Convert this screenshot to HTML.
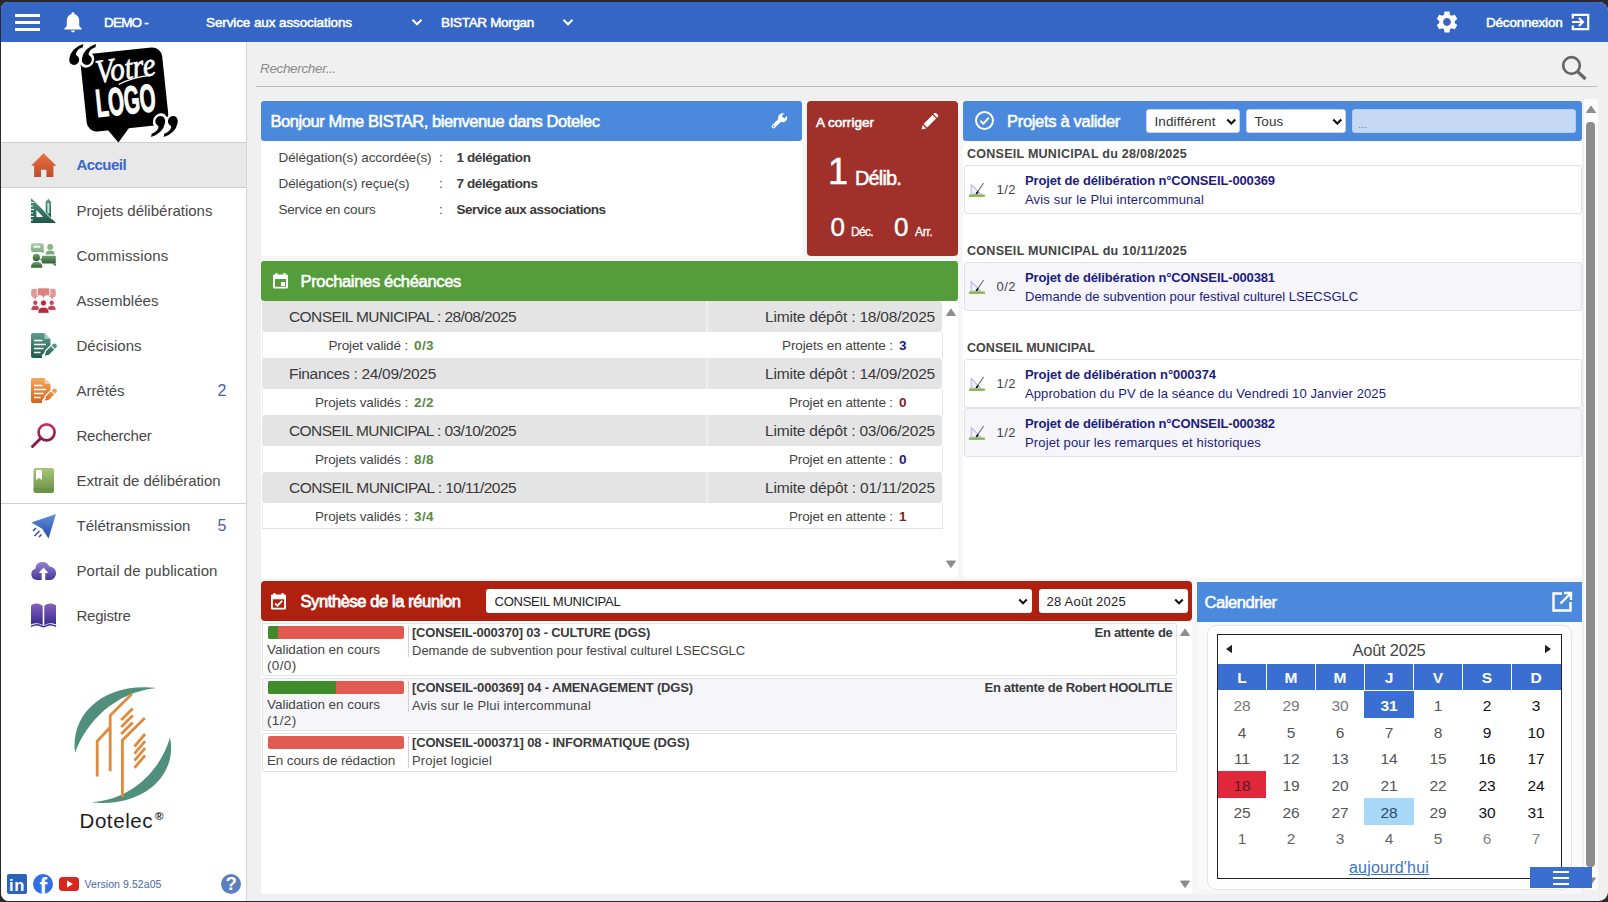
<!DOCTYPE html>
<html lang="fr">
<head>
<meta charset="utf-8">
<title>Dotelec</title>
<style>
*{box-sizing:border-box;margin:0;padding:0}
html,body{width:1608px;height:902px;overflow:hidden;background:#2a2a2e;font-family:"Liberation Sans",sans-serif;color:#333}
#app{position:absolute;left:1px;top:2px;width:1607px;height:898.6px;background:#f0f0f0;border-radius:7px 9px 9px 8px;overflow:hidden}
#pg{position:absolute;left:-1px;top:-2px;width:1608px;height:902px}
.a{position:absolute}
.t{position:absolute;white-space:pre;line-height:1;color:#333}
</style>
</head>
<body>
<div id="app"><div id="pg">
<div class="a" style="left:0px;top:0px;width:1608px;height:42px;background:#3566c5;"></div>
<div class="a" style="left:15px;top:14px;width:25px;height:3px;background:#fff;"></div>
<div class="a" style="left:15px;top:21px;width:25px;height:3px;background:#fff;"></div>
<div class="a" style="left:15px;top:28px;width:25px;height:3px;background:#fff;"></div>
<svg class="a" style="left:63px;top:11px;" width="20" height="22" viewBox="0 0 20 22"><path d="M10 1.200c-.9 0-1.600.7-1.600 1.500v.5C5.600 3.900 3.800 6.300 3.800 9.200v4.500c0 1.100-.5 2.100-1.300 2.800L1.300 17.600v1h17.400v-1l-1.200-1.100c-.8-.7-1.300-1.700-1.300-2.800V9.200c0-2.900-1.800-5.300-4.600-6V2.700c0-.8-.7-1.500-1.600-1.500zM8 19.400c0 1.100.9 1.900 2 1.900s2-.8 2-1.900z" fill="#fff"/></svg>
<span class="t" style="left:104.00px;top:15.87px;font-size:13.5px;color:#fff;letter-spacing:-0.792px;-webkit-text-stroke:0.5px currentColor;">DEMO -</span>
<span class="t" style="left:206.00px;top:15.87px;font-size:13.5px;color:#fff;letter-spacing:-0.107px;-webkit-text-stroke:0.5px currentColor;">Service aux associations</span>
<svg class="a" style="left:411px;top:18px;" width="12" height="9" viewBox="0 0 12 9"><path d="M1.500 1.800L6 6.300L10.500 1.800" fill="none" stroke="#fff" stroke-width="2.200"/></svg>
<span class="t" style="left:441.00px;top:15.87px;font-size:13.5px;color:#fff;letter-spacing:-0.331px;-webkit-text-stroke:0.5px currentColor;">BISTAR Morgan</span>
<svg class="a" style="left:562px;top:18px;" width="12" height="9" viewBox="0 0 12 9"><path d="M1.500 1.800L6 6.300L10.500 1.800" fill="none" stroke="#fff" stroke-width="2.200"/></svg>
<svg class="a" style="left:1434.2px;top:9px;" width="26" height="26" viewBox="0 0 24 24"><path fill="#fff" d="M19.140 12.940c.040-.3.060-.61.060-.94 0-.32-.020-.64-.070-.94l2.030-1.580c.180-.14.230-.41.120-.61l-1.920-3.320c-.12-.22-.37-.29-.59-.22l-2.390.96c-.5-.38-1.030-.7-1.620-.94l-.36-2.540c-.040-.24-.24-.41-.48-.41h-3.840c-.24 0-.43.170-.47.410l-.36 2.540c-.59.240-1.130.57-1.620.94l-2.390-.96c-.22-.08-.47 0-.59.220L2.740 8.870c-.12.210-.08.470.12.610l2.030 1.580c-.05.300-.09.630-.09.940s.020.640.070.940l-2.030 1.580c-.18.140-.23.410-.12.610l1.920 3.320c.12.220.37.290.59.220l2.390-.96c.5.380 1.030.7 1.620.94l.36 2.540c.05.240.24.410.48.410h3.840c.24 0 .44-.17.470-.41l.36-2.540c.59-.24 1.130-.56 1.620-.94l2.390.96c.22.080.47 0 .59-.22l1.920-3.320c.12-.22.070-.47-.12-.61l-2.010-1.580zM12 15.600c-1.980 0-3.600-1.620-3.600-3.600s1.620-3.600 3.600-3.600 3.600 1.620 3.600 3.600-1.620 3.600-3.600 3.600z"/></svg>
<span class="t" style="left:1486.00px;top:15.87px;font-size:13.5px;color:#fff;letter-spacing:-0.210px;-webkit-text-stroke:0.5px currentColor;">Déconnexion</span>
<svg class="a" style="left:1571px;top:13px;" width="19" height="18" viewBox="0 0 19 18"><path d="M1.800 5.500V1.800H17.200V16.200H1.800V12.500" fill="none" stroke="#fff" stroke-width="2.200"/><path d="M1 9H11.500M8 5L12 9L8 13" fill="none" stroke="#fff" stroke-width="2.200"/></svg>
<div class="a" style="left:0px;top:42px;width:246px;height:860px;background:#fff;"></div>
<div class="a" style="left:246px;top:42px;width:1px;height:860px;background:#d4d4d4;"></div>
<div class="a" style="left:1px;top:142px;width:245px;height:46px;background:#e8e8e8;border-top:1px solid #cfcfcf;border-bottom:1px solid #cfcfcf;"></div>
<div class="a" style="left:1px;top:502.5px;width:245px;height:1px;background:#cfcfcf;"></div>
<span class="t" style="left:76.50px;top:157.30px;font-size:15px;color:#3a66c4;font-weight:bold;letter-spacing:-0.551px;">Accueil</span>
<span class="t" style="left:76.50px;top:203.30px;font-size:15px;color:#484848;">Projets délibérations</span>
<span class="t" style="left:76.50px;top:248.30px;font-size:15px;color:#484848;letter-spacing:0.180px;">Commissions</span>
<span class="t" style="left:76.50px;top:293.30px;font-size:15px;color:#484848;letter-spacing:0.030px;">Assemblées</span>
<span class="t" style="left:76.50px;top:338.30px;font-size:15px;color:#484848;">Décisions</span>
<span class="t" style="left:76.50px;top:383.30px;font-size:15px;color:#484848;letter-spacing:-0.051px;">Arrêtés</span>
<span class="t" style="left:76.50px;top:428.30px;font-size:15px;color:#484848;letter-spacing:-0.255px;">Rechercher</span>
<span class="t" style="left:76.50px;top:473.30px;font-size:15px;color:#484848;letter-spacing:-0.048px;">Extrait de délibération</span>
<span class="t" style="left:76.50px;top:518.30px;font-size:15px;color:#484848;letter-spacing:0.039px;">Télétransmission</span>
<span class="t" style="left:76.50px;top:563.30px;font-size:15px;color:#484848;letter-spacing:0.079px;">Portail de publication</span>
<span class="t" style="left:76.50px;top:608.30px;font-size:15px;color:#484848;letter-spacing:-0.232px;">Registre</span>
<span class="t" style="left:217.50px;top:383.46px;font-size:16px;color:#4560b0;">2</span>
<span class="t" style="left:217.50px;top:518.46px;font-size:16px;color:#4560b0;">5</span>
<svg width="0" height="0" style="position:absolute"><defs><linearGradient id="gH" x1="0" y1="0" x2="0" y2="1"><stop offset="0" stop-color="#ea7340"/><stop offset="1" stop-color="#bf4a2a"/></linearGradient><linearGradient id="gR" x1="0" y1="0" x2="0" y2="1"><stop offset="0" stop-color="#5a9886"/><stop offset="1" stop-color="#1d5747"/></linearGradient><linearGradient id="gC1" x1="0" y1="0" x2="0" y2="1"><stop offset="0" stop-color="#a9cca6"/><stop offset="1" stop-color="#7fae80"/></linearGradient><linearGradient id="gC2" x1="0" y1="0" x2="0" y2="1"><stop offset="0" stop-color="#6fa070"/><stop offset="1" stop-color="#2f6035"/></linearGradient><linearGradient id="gA" x1="0" y1="0" x2="0" y2="1"><stop offset="0" stop-color="#e39a98"/><stop offset="1" stop-color="#ad2436"/></linearGradient><linearGradient id="gD" x1="0" y1="0" x2="0" y2="1"><stop offset="0" stop-color="#5f9c8c"/><stop offset="1" stop-color="#1f5a4a"/></linearGradient><linearGradient id="gO" x1="0" y1="0" x2="0" y2="1"><stop offset="0" stop-color="#f3a85a"/><stop offset="1" stop-color="#d4631c"/></linearGradient><linearGradient id="gS" x1="0" y1="0" x2="0" y2="1"><stop offset="0" stop-color="#c92f62"/><stop offset="1" stop-color="#861a46"/></linearGradient><linearGradient id="gB" x1="0" y1="0" x2="0" y2="1"><stop offset="0" stop-color="#a6c678"/><stop offset="1" stop-color="#688e46"/></linearGradient><linearGradient id="gP" x1="0" y1="0" x2="0" y2="1"><stop offset="0" stop-color="#5f92e0"/><stop offset="1" stop-color="#2846a4"/></linearGradient><linearGradient id="gU" x1="0" y1="0" x2="0" y2="1"><stop offset="0" stop-color="#9484d6"/><stop offset="1" stop-color="#46369a"/></linearGradient><linearGradient id="gK" x1="0" y1="0" x2="0" y2="1"><stop offset="0" stop-color="#8462c0"/><stop offset="1" stop-color="#36288a"/></linearGradient></defs></svg><svg class="a" style="left:31px;top:152.8px;overflow:visible" width="25" height="25" viewBox="0 0 25 25"><path fill="url(#gH)" d="M12.600 0.300L25.400 12.800H22.400V24H15.400V16.800H10V24H3.100V12.800H0.100Z"/></svg><svg class="a" style="left:31px;top:198.0px;overflow:visible" width="25" height="25" viewBox="0 0 25 25"><path fill="url(#gR)" fill-rule="evenodd" d="M0 0L25 25H0ZM5.400 12L12.200 19H5.400Z"/><path d="M0 4.500H3M0 8H2M0 11.500H3M0 15H2M0 18.500H3M0 22H2" stroke="#fff" stroke-width="1.100"/><path fill="url(#gR)" stroke="#fff" stroke-width="0.900" d="M14.200 4L17.350 0.200L20.500 4V20.800L14.200 14.500Z"/><path d="M17.350 5V15.500" stroke="#bfe3d6" stroke-width="2.100"/></svg><svg class="a" style="left:31px;top:243.1px;overflow:visible" width="25" height="25" viewBox="0 0 25 25"><rect x="0" y="0.300" width="12.700" height="8.700" rx="2" fill="url(#gC1)"/><path d="M9.500 8.800L13.600 10.300L12.200 7Z" fill="#86b286"/><rect x="2.500" y="2.800" width="6.700" height="1.800" fill="#fff"/><circle cx="19.200" cy="4.100" r="3" fill="#8ab488"/><path d="M14.800 11.500C14.800 8.500 16.500 7.600 19.200 7.600S23.600 8.500 23.600 11.500Z" fill="#7aaa7a"/><circle cx="5.400" cy="14.500" r="3.700" fill="url(#gC2)"/><path d="M0 24.800C0 20.300 2 19 5.700 19S11.400 20.300 11.400 24.800Z" fill="url(#gC2)"/><rect x="11" y="12.700" width="13.800" height="7.900" rx="0.800" fill="url(#gC2)"/><path d="M21.300 20.500L24.800 23.300V20.500ZM11 15L9.300 16.600L11 18.200Z" fill="#39703f"/></svg><svg class="a" style="left:31px;top:288.0px;overflow:visible" width="25" height="25" viewBox="0 0 25 25"><rect x="0.200" y="0.800" width="7" height="8.400" rx="2.200" fill="#e09896"/><rect x="17.800" y="0.800" width="7" height="8.400" rx="2.200" fill="#e09896"/><path d="M2.500 9L4 11.500L5.500 9ZM19.500 9L21 11.500L22.500 9Z" fill="#d88"/><path d="M7.700 -0.200H17.300A1.500 1.500 0 0 1 18.800 1.300V6.400A1.500 1.500 0 0 1 17.300 7.900H14.300L12.500 10.500L10.700 7.900H7.700A1.500 1.500 0 0 1 6.200 6.400V1.300A1.500 1.500 0 0 1 7.700 -0.200Z" fill="#dc8282" stroke="#fff" stroke-width="1"/><circle cx="4.3" cy="14.7" r="2.18" fill="#c4475a"/><path d="M0.31 22.11C0.31 18.50 1.92 17.74 4.3 17.74S8.29 18.50 8.29 22.11Z" fill="#c4475a"/><circle cx="20.7" cy="14.7" r="2.18" fill="#c4475a"/><path d="M16.71 22.11C16.71 18.50 18.32 17.74 20.7 17.74S24.69 18.50 24.69 22.11Z" fill="#c4475a"/><g stroke="#fff" stroke-width="0.800"><circle cx="12.5" cy="15" r="3.04" fill="#b32b3c"/><path d="M6.96 25.30C6.96 20.28 9.20 19.22 12.5 19.22S18.04 20.28 18.04 25.30Z" fill="#b32b3c"/></g></svg><svg class="a" style="left:31px;top:333.0px;overflow:visible" width="25" height="25" viewBox="0 0 25 25"><path fill="url(#gD)" d="M2 0H13.500L19.500 6V13.500L11 22V25H2A2 2 0 0 1 0 23V2A2 2 0 0 1 2 0Z"/><path d="M13.500 0V6H19.500Z" fill="#fff" opacity=".5"/><path d="M3 7.500H11.500M3 11.500H15M3 15.500H12.500M3 19.500H9.500" stroke="#fff" stroke-width="1.500"/><g transform="translate(19.300 17.200) rotate(45)"><path fill="url(#gD)" stroke="#fff" stroke-width="1.300" d="M-3 -6A3 3 0 0 1 3 -6V3.800L0 9L-3 3.800Z"/><path d="M-3 -3.800H3" stroke="#fff" stroke-width="1"/></g></svg><svg class="a" style="left:31px;top:378.0px;overflow:visible" width="25" height="25" viewBox="0 0 25 25"><path fill="url(#gO)" d="M2 0H13.500L19.500 6V13.500L11 22V25H2A2 2 0 0 1 0 23V2A2 2 0 0 1 2 0Z"/><path d="M13.500 0V6H19.500Z" fill="#fff" opacity=".5"/><path d="M3 7.500H11.500M3 11.500H15M3 15.500H12.500M3 19.500H9.500" stroke="#fff" stroke-width="1.500"/><g transform="translate(19.300 17.200) rotate(45)"><path fill="url(#gO)" stroke="#fff" stroke-width="1.300" d="M-3 -6A3 3 0 0 1 3 -6V3.800L0 9L-3 3.800Z"/><path d="M-3 -3.800H3" stroke="#fff" stroke-width="1"/></g></svg><svg class="a" style="left:31px;top:422.7px;overflow:visible" width="25" height="25" viewBox="0 0 25 25"><circle cx="15.600" cy="9.300" r="8" fill="none" stroke="url(#gS)" stroke-width="2.700"/><path d="M9.800 15.200L1.500 23.500" stroke="#8e1c4a" stroke-width="3" stroke-linecap="round"/></svg><svg class="a" style="left:31px;top:468.0px;overflow:visible" width="25" height="25" viewBox="0 0 25 25"><rect x="2.500" y="0" width="20.500" height="25" rx="2.200" fill="url(#gB)"/><path d="M5 2H11V12L8 10L5 12Z" fill="#fff"/><rect x="2.500" y="20.500" width="20.500" height="1" fill="#5e8440" opacity=".5"/></svg><svg class="a" style="left:31px;top:513.8px;overflow:visible" width="25" height="25" viewBox="0 0 25 25"><path fill="url(#gP)" d="M25 0L0.300 8.500L11.200 14.800L17.500 24.600Z"/><path d="M2 17L5 14M3.500 22L8.500 17M8 23L10.500 20.500" stroke="#3a4fa8" stroke-width="1.600"/></svg><svg class="a" style="left:31px;top:558.0px;overflow:visible" width="25" height="25" viewBox="0 0 25 25"><path fill="url(#gU)" d="M6 22A5.800 5.800 0 0 1 4.300 10.700A7.300 7.300 0 0 1 18.300 8.500A6.800 6.800 0 0 1 19.500 22Z"/><path d="M12.500 9.500L17.300 15H14.300V22H10.700V15H7.700Z" fill="#fff"/></svg><svg class="a" style="left:31px;top:602.3px;overflow:visible" width="25" height="25" viewBox="0 0 25 25"><path fill="url(#gK)" d="M0 3.500C4 0.500 9 1 11.700 4V23.500C9 21 4 20.500 0 22.500Z"/><path fill="url(#gK)" d="M25 3.500C21 0.500 16 1 13.300 4V23.500C16 21 21 20.500 25 22.500Z"/><path d="M0 24.300C4 22.500 8.500 22.500 11 24.500H14C16.500 22.500 21 22.500 25 24.300" fill="none" stroke="#3a2a8a" stroke-width="1.400"/></svg>
<svg class="a" style="left:60px;top:42px" width="130" height="103" viewBox="60 42 130 103"><g transform="rotate(-6 124.5 90)"><rect x="83.500" y="50.500" width="82" height="78" rx="10" fill="#000"/><path d="M103 127L113 141.500L126 127Z" fill="#000"/></g><text x="0" y="0" transform="translate(61 89.500) skewX(-10) scale(0.9 1.08)" style="font-family:'Liberation Serif',serif;font-weight:bold;font-size:64px;fill:#000;stroke:#fff;stroke-width:5px;paint-order:stroke">“</text><text x="0" y="0" transform="translate(144.500 161.500) skewX(-10) scale(0.9 1.08)" style="font-family:'Liberation Serif',serif;font-weight:bold;font-size:64px;fill:#000;stroke:#fff;stroke-width:5px;paint-order:stroke">”</text><g transform="rotate(-8 125 72)"><text x="96" y="79" textLength="60" lengthAdjust="spacingAndGlyphs" style="font-family:'Liberation Serif',serif;font-style:italic;font-size:33px;fill:#fff;stroke:#fff;stroke-width:0.700px">Votre</text><path d="M117 83.500C128 79.500 140 78.500 152 79" stroke="#fff" stroke-width="1.400" fill="none"/></g><g transform="rotate(-6 126 104)"><text x="96" y="114" textLength="60" lengthAdjust="spacingAndGlyphs" style="font-family:'Liberation Sans',sans-serif;font-weight:bold;font-size:39px;fill:#fff;stroke:#fff;stroke-width:1.200px">LOGO</text></g></svg>
<svg class="a" style="left:60px;top:680px" width="130" height="160" viewBox="60 680 130 160"><path fill="#4f8f7b" d="M75.100 752.700C70 714 104 682 156.600 688C115 692 86 722 75.100 752.700Z"/><path fill="#4f8f7b" d="M170 737.600C178 776 142 808 91 802.300C130 800 160 772 170 737.600Z"/><path d="M97.200 776.600V741.200L110.500 727" fill="none" stroke="#e08a3c" stroke-width="2.800"/><path d="M110.200 771.300V715.500L131.800 694" fill="none" stroke="#e08a3c" stroke-width="2.800"/><path d="M122.400 797V740.300L144.800 718.100" fill="none" stroke="#e08a3c" stroke-width="2.800"/><path d="M121.200 720.0L132.700 708.4" stroke="#e08a3c" stroke-width="2.800"/><path d="M121.200 727.0L132.700 715.4" stroke="#e08a3c" stroke-width="2.800"/><path d="M121.200 734.0L132.700 722.4" stroke="#e08a3c" stroke-width="2.800"/><path d="M134.500 746.5L145.100 734.0" stroke="#e08a3c" stroke-width="2.800"/><path d="M134.500 753.6L145.100 741.1" stroke="#e08a3c" stroke-width="2.800"/><path d="M134.500 760.7L145.100 748.2" stroke="#e08a3c" stroke-width="2.800"/><path d="M134.500 767.8L145.100 755.3" stroke="#e08a3c" stroke-width="2.800"/><text x="79.500" y="828" textLength="73" lengthAdjust="spacing" style="font-family:'Liberation Sans',sans-serif;font-size:20.500px;fill:#1c1c1c">Dotelec</text><text x="155" y="819.500" style="font-family:'Liberation Sans',sans-serif;font-size:11.500px;font-weight:bold;fill:#1c1c1c">®</text></svg>
<div class="a" style="left:7px;top:874px;width:20px;height:20px;background:#2a63b8;border-radius:2px"></div><span class="t" style="left:9.00px;top:877.33px;font-size:16.5px;color:#fff;font-weight:bold;letter-spacing:0.664px;">in</span><div class="a" style="left:33px;top:874px;width:20.200px;height:20.200px;background:#2f6fe8;border-radius:50%;overflow:hidden"><span style="position:absolute;left:6.500px;top:1.500px;font-size:23px;line-height:1;font-weight:bold;color:#fff">f</span></div><div class="a" style="left:59px;top:877px;width:20px;height:14px;background:#d8281e;border-radius:3.500px"></div><svg class="a" style="left:66px;top:880px" width="8" height="8" viewBox="0 0 8 8"><path d="M1 0.500L7 4L1 7.500Z" fill="#fff"/></svg><span class="t" style="left:84.50px;top:878.91px;font-size:10.5px;color:#4a66a8;letter-spacing:0.073px;">Version 9.52a05</span><div class="a" style="left:221px;top:874px;width:20.200px;height:20.200px;background:#5b80c0;border-radius:50%"></div><span class="t" style="left:225.54px;top:875.04px;font-size:18.5px;color:#fff;font-weight:bold;">?</span>
<span class="t" style="left:260.00px;top:61.87px;font-size:13.5px;color:#8a8a8a;font-style:italic;letter-spacing:-0.350px;">Rechercher...</span>
<div class="a" style="left:256px;top:86px;width:1341px;height:1px;background:#bdbdbd;"></div>
<svg class="a" style="left:1559px;top:53px;" width="30" height="30" viewBox="0 0 30 30"><circle cx="12.500" cy="12.500" r="8.300" fill="none" stroke="#666" stroke-width="2.700"/><path d="M18.500 18.500L26.500 26" stroke="#666" stroke-width="3.200" fill="none"/></svg>
<div class="a" style="left:261px;top:101px;width:1321px;height:793px;background:#f6f6f6;"></div>
<div class="a" style="left:261px;top:101px;width:541px;height:155px;background:#fff;border-radius:3px;"></div>
<div class="a" style="left:261px;top:101px;width:541px;height:40px;background:#4a89dc;border-radius:3px;"></div>
<span class="t" style="left:270.50px;top:113.03px;font-size:16.5px;color:#fff;letter-spacing:-0.436px;-webkit-text-stroke:0.55px currentColor;">Bonjour Mme BISTAR, bienvenue dans Dotelec</span>
<svg class="a" style="left:770.5px;top:113px;" width="17" height="16" viewBox="0 0 17 16"><path d="M2.600 13.400L9.200 6.800" stroke="#fff" stroke-width="3.800" stroke-linecap="round"/><circle cx="11.700" cy="4.700" r="4.500" fill="#fff"/><rect x="11.400" y="-0.500" width="3.600" height="5.200" transform="rotate(45 13.200 2.100) translate(0.700 -0.300)" fill="#4a89dc"/><circle cx="2.700" cy="13.300" r="0.850" fill="#4a89dc"/></svg>
<span class="t" style="left:278.50px;top:151.07px;font-size:13.5px;color:#444;letter-spacing:-0.093px;">Délégation(s) accordée(s)</span>
<span class="t" style="left:439.00px;top:151.07px;font-size:13.5px;color:#444;">:</span>
<span class="t" style="left:456.50px;top:151.07px;font-size:13.5px;color:#3a3a3a;font-weight:bold;letter-spacing:-0.397px;">1 délégation</span>
<span class="t" style="left:278.50px;top:177.07px;font-size:13.5px;color:#444;letter-spacing:-0.116px;">Délégation(s) reçue(s)</span>
<span class="t" style="left:439.00px;top:177.07px;font-size:13.5px;color:#444;">:</span>
<span class="t" style="left:456.50px;top:177.07px;font-size:13.5px;color:#3a3a3a;font-weight:bold;letter-spacing:-0.406px;">7 délégations</span>
<span class="t" style="left:278.50px;top:203.07px;font-size:13.5px;color:#444;letter-spacing:-0.222px;">Service en cours</span>
<span class="t" style="left:439.00px;top:203.07px;font-size:13.5px;color:#444;">:</span>
<span class="t" style="left:456.50px;top:203.07px;font-size:13.5px;color:#3a3a3a;font-weight:bold;letter-spacing:-0.483px;">Service aux associations</span>
<div class="a" style="left:807px;top:101px;width:151px;height:155px;background:#9f302a;border-radius:4px;"></div>
<span class="t" style="left:816.00px;top:116.07px;font-size:13.5px;color:#fff;letter-spacing:0.022px;-webkit-text-stroke:0.55px currentColor;">A corriger</span>
<svg class="a" style="left:921px;top:112.5px;" width="18" height="17" viewBox="0 0 18 17"><path fill="#fff" d="M0.500 16.600L1.700 11.900L5.200 15.400ZM2.600 10.900L11.500 2L15.100 5.600L6.200 14.500ZM12.400 1.100L13.200 0.300A1.500 1.500 0 0 1 15.300 0.300L16.800 1.800A1.500 1.500 0 0 1 16.800 3.900L16 4.700Z"/></svg>
<span class="t" style="left:828.00px;top:154.03px;font-size:36px;color:#fff;-webkit-text-stroke:0.5px currentColor;">1</span>
<span class="t" style="left:855.00px;top:167.57px;font-size:20px;color:#fff;letter-spacing:-0.857px;-webkit-text-stroke:0.5px currentColor;">Délib.</span>
<span class="t" style="left:830.50px;top:213.99px;font-size:26px;color:#fff;-webkit-text-stroke:0.4px currentColor;">0</span>
<span class="t" style="left:851.00px;top:225.84px;font-size:12px;color:#fff;letter-spacing:-0.672px;-webkit-text-stroke:0.3px currentColor;">Déc.</span>
<span class="t" style="left:894.00px;top:213.99px;font-size:26px;color:#fff;-webkit-text-stroke:0.4px currentColor;">0</span>
<span class="t" style="left:915.00px;top:225.84px;font-size:12px;color:#fff;letter-spacing:-0.293px;-webkit-text-stroke:0.3px currentColor;">Arr.</span>
<div class="a" style="left:963px;top:101px;width:619px;height:477px;background:#fff;border-radius:3px;"></div>
<div class="a" style="left:963px;top:101px;width:619px;height:40px;background:#4a89dc;border-radius:3px;"></div>
<svg class="a" style="left:974px;top:110px;" width="21" height="21" viewBox="0 0 21 21"><circle cx="10.500" cy="10.500" r="8.500" fill="none" stroke="#fff" stroke-width="2"/><path d="M6.300 10.800L9.300 13.700L14.800 7.800" fill="none" stroke="#fff" stroke-width="2"/></svg>
<span class="t" style="left:1007.00px;top:113.03px;font-size:16.5px;color:#fff;letter-spacing:-0.312px;-webkit-text-stroke:0.55px currentColor;">Projets à valider</span>
<div class="a" style="left:1146px;top:109px;width:94px;height:24px;background:#fff;border-radius:3px;border:1px solid #c9d6ea;"></div>
<span class="t" style="left:1154.50px;top:114.57px;font-size:13.5px;letter-spacing:0.109px;">Indifférent</span>
<svg class="a" style="left:1226px;top:117.5px;" width="10.6" height="7.4" viewBox="0 0 10 7"><path d="M1.200 1.500L5 5.300L8.800 1.500" fill="none" stroke="#111" stroke-width="2"/></svg>
<div class="a" style="left:1246px;top:109px;width:100px;height:24px;background:#fff;border-radius:3px;border:1px solid #c9d6ea;"></div>
<span class="t" style="left:1254.50px;top:114.57px;font-size:13.5px;letter-spacing:0.117px;">Tous</span>
<svg class="a" style="left:1332px;top:117.5px;" width="10.6" height="7.4" viewBox="0 0 10 7"><path d="M1.200 1.500L5 5.300L8.800 1.500" fill="none" stroke="#111" stroke-width="2"/></svg>
<div class="a" style="left:1352px;top:109px;width:224px;height:24px;background:#c5d9f5;border-radius:3px;border:1px solid #b5cdf0;"></div>
<span class="t" style="left:1358.00px;top:118.69px;font-size:11px;color:#6f86b0;">...</span>
<span class="t" style="left:967.00px;top:148.22px;font-size:12.5px;color:#444;font-weight:bold;letter-spacing:0.262px;">CONSEIL MUNICIPAL du 28/08/2025</span>
<div class="a" style="left:964px;top:165px;width:618px;height:49px;background:#fff;border:1px solid #e2e2e6;border-radius:3px;"></div><svg class="a" style="left:968px;top:180.7px;" width="18" height="18" viewBox="0 0 18 18"><path d="M3.200 3.500V13.200H12.800Z" fill="#eeeefb" stroke="#b9b9e2" stroke-width="1.100"/><path d="M15.600 2L8.500 12.600" stroke="#707070" stroke-width="1.100"/><path d="M10 10.400L8.300 12.900" stroke="#111" stroke-width="1.700"/><rect x="0.900" y="13.500" width="16" height="2.400" fill="#8ab94a"/></svg><span class="t" style="left:996.50px;top:182.80px;font-size:13px;color:#444;letter-spacing:0.474px;">1/2</span><span class="t" style="left:1025.00px;top:174.00px;font-size:13px;color:#1c1c80;font-weight:bold;letter-spacing:-0.133px;">Projet de délibération n°CONSEIL-000369</span><span class="t" style="left:1025.00px;top:193.00px;font-size:13px;color:#1c1c80;letter-spacing:0.170px;">Avis sur le Plui intercommunal</span>
<span class="t" style="left:967.00px;top:245.22px;font-size:12.5px;color:#444;font-weight:bold;letter-spacing:0.284px;">CONSEIL MUNICIPAL du 10/11/2025</span>
<div class="a" style="left:964px;top:262px;width:618px;height:49px;background:#f5f5fa;border:1px solid #e2e2e6;border-radius:3px;"></div><svg class="a" style="left:968px;top:277.7px;" width="18" height="18" viewBox="0 0 18 18"><path d="M3.200 3.500V13.200H12.800Z" fill="#eeeefb" stroke="#b9b9e2" stroke-width="1.100"/><path d="M15.600 2L8.500 12.600" stroke="#707070" stroke-width="1.100"/><path d="M10 10.400L8.300 12.900" stroke="#111" stroke-width="1.700"/><rect x="0.900" y="13.500" width="16" height="2.400" fill="#8ab94a"/></svg><span class="t" style="left:996.50px;top:279.80px;font-size:13px;color:#444;letter-spacing:0.474px;">0/2</span><span class="t" style="left:1025.00px;top:271.00px;font-size:13px;color:#1c1c80;font-weight:bold;letter-spacing:-0.133px;">Projet de délibération n°CONSEIL-000381</span><span class="t" style="left:1025.00px;top:290.00px;font-size:13px;color:#1c1c80;">Demande de subvention pour festival culturel LSECSGLC</span>
<span class="t" style="left:967.00px;top:342.22px;font-size:12.5px;color:#444;font-weight:bold;letter-spacing:0.040px;">CONSEIL MUNICIPAL</span>
<div class="a" style="left:964px;top:359px;width:618px;height:49px;background:#fff;border:1px solid #e2e2e6;border-radius:3px;"></div><svg class="a" style="left:968px;top:374.7px;" width="18" height="18" viewBox="0 0 18 18"><path d="M3.200 3.500V13.200H12.800Z" fill="#eeeefb" stroke="#b9b9e2" stroke-width="1.100"/><path d="M15.600 2L8.500 12.600" stroke="#707070" stroke-width="1.100"/><path d="M10 10.400L8.300 12.900" stroke="#111" stroke-width="1.700"/><rect x="0.900" y="13.500" width="16" height="2.400" fill="#8ab94a"/></svg><span class="t" style="left:996.50px;top:376.80px;font-size:13px;color:#444;letter-spacing:0.474px;">1/2</span><span class="t" style="left:1025.00px;top:368.00px;font-size:13px;color:#1c1c80;font-weight:bold;letter-spacing:-0.066px;">Projet de délibération n°000374</span><span class="t" style="left:1025.00px;top:387.00px;font-size:13px;color:#1c1c80;letter-spacing:0.093px;">Approbation du PV de la séance du Vendredi 10 Janvier 2025</span>
<div class="a" style="left:964px;top:408px;width:618px;height:49px;background:#f5f5fa;border:1px solid #e2e2e6;border-radius:3px;"></div><svg class="a" style="left:968px;top:423.7px;" width="18" height="18" viewBox="0 0 18 18"><path d="M3.200 3.500V13.200H12.800Z" fill="#eeeefb" stroke="#b9b9e2" stroke-width="1.100"/><path d="M15.600 2L8.500 12.600" stroke="#707070" stroke-width="1.100"/><path d="M10 10.400L8.300 12.900" stroke="#111" stroke-width="1.700"/><rect x="0.900" y="13.500" width="16" height="2.400" fill="#8ab94a"/></svg><span class="t" style="left:996.50px;top:425.80px;font-size:13px;color:#444;letter-spacing:0.474px;">1/2</span><span class="t" style="left:1025.00px;top:417.00px;font-size:13px;color:#1c1c80;font-weight:bold;letter-spacing:-0.133px;">Projet de délibération n°CONSEIL-000382</span><span class="t" style="left:1025.00px;top:436.00px;font-size:13px;color:#1c1c80;letter-spacing:0.137px;">Projet pour les remarques et historiques</span>
<div class="a" style="left:261px;top:261px;width:697px;height:317px;background:#fff;border-radius:3px;"></div>
<div class="a" style="left:261px;top:261px;width:697px;height:40px;background:#559d3b;border-radius:3px;"></div>
<svg class="a" style="left:272px;top:271.5px;" width="17" height="17" viewBox="0 0 17 17"><path fill="#fff" fill-rule="evenodd" d="M2.200 2.500H3.500V1H5.500V2.500H11.500V1H13.500V2.500H14.800A1.200 1.200 0 0 1 16 3.700V15.300A1.200 1.200 0 0 1 14.800 16.500H2.200A1.200 1.200 0 0 1 1 15.300V3.700A1.200 1.200 0 0 1 2.200 2.500ZM2.900 7V14.700H14.100V7ZM9 10H13V14H9Z"/></svg>
<span class="t" style="left:300.50px;top:273.03px;font-size:16.5px;color:#fff;letter-spacing:-0.323px;-webkit-text-stroke:0.55px currentColor;">Prochaines échéances</span>
<div class="a" style="left:262px;top:301px;width:680px;height:31px;background:#e4e4e4;border-radius:3px;"></div>
<div class="a" style="left:706px;top:301px;width:2px;height:31px;background:#eeeeee;"></div>
<div class="a" style="left:262px;top:332px;width:681px;height:26px;background:#fff;border-right:1px solid #e4e4e4;border-left:1px solid #ececec;"></div>
<span class="t" style="left:289.00px;top:308.88px;font-size:15.5px;color:#3a3a3a;letter-spacing:-0.598px;">CONSEIL MUNICIPAL : 28/08/2025</span>
<span class="t" style="left:765.00px;top:308.88px;font-size:15.5px;color:#3a3a3a;letter-spacing:-0.198px;">Limite dépôt : 18/08/2025</span>
<span class="t" style="left:328.50px;top:339.07px;font-size:13.5px;color:#444;letter-spacing:-0.153px;">Projet validé :</span>
<span class="t" style="left:414.00px;top:339.07px;font-size:13.5px;color:#5b8a3e;font-weight:bold;letter-spacing:0.406px;">0/3</span>
<span class="t" style="left:782.00px;top:339.07px;font-size:13.5px;color:#444;letter-spacing:-0.116px;">Projets en attente :</span>
<span class="t" style="left:899.00px;top:339.07px;font-size:13.5px;color:#1c1c80;font-weight:bold;">3</span>
<div class="a" style="left:262px;top:358px;width:680px;height:31px;background:#e4e4e4;border-radius:3px;"></div>
<div class="a" style="left:706px;top:358px;width:2px;height:31px;background:#eeeeee;"></div>
<div class="a" style="left:262px;top:389px;width:681px;height:26px;background:#fff;border-right:1px solid #e4e4e4;border-left:1px solid #ececec;"></div>
<span class="t" style="left:289.00px;top:365.88px;font-size:15.5px;color:#3a3a3a;letter-spacing:-0.304px;">Finances : 24/09/2025</span>
<span class="t" style="left:765.00px;top:365.88px;font-size:15.5px;color:#3a3a3a;letter-spacing:-0.198px;">Limite dépôt : 14/09/2025</span>
<span class="t" style="left:315.00px;top:396.07px;font-size:13.5px;color:#444;letter-spacing:-0.135px;">Projets validés :</span>
<span class="t" style="left:414.00px;top:396.07px;font-size:13.5px;color:#5b8a3e;font-weight:bold;letter-spacing:0.406px;">2/2</span>
<span class="t" style="left:789.00px;top:396.07px;font-size:13.5px;color:#444;letter-spacing:-0.136px;">Projet en attente :</span>
<span class="t" style="left:899.00px;top:396.07px;font-size:13.5px;color:#8a1c1c;font-weight:bold;">0</span>
<div class="a" style="left:262px;top:415px;width:680px;height:31px;background:#e4e4e4;border-radius:3px;"></div>
<div class="a" style="left:706px;top:415px;width:2px;height:31px;background:#eeeeee;"></div>
<div class="a" style="left:262px;top:446px;width:681px;height:26px;background:#fff;border-right:1px solid #e4e4e4;border-left:1px solid #ececec;"></div>
<span class="t" style="left:289.00px;top:422.88px;font-size:15.5px;color:#3a3a3a;letter-spacing:-0.598px;">CONSEIL MUNICIPAL : 03/10/2025</span>
<span class="t" style="left:765.00px;top:422.88px;font-size:15.5px;color:#3a3a3a;letter-spacing:-0.198px;">Limite dépôt : 03/06/2025</span>
<span class="t" style="left:315.00px;top:453.07px;font-size:13.5px;color:#444;letter-spacing:-0.135px;">Projets validés :</span>
<span class="t" style="left:414.00px;top:453.07px;font-size:13.5px;color:#5b8a3e;font-weight:bold;letter-spacing:0.406px;">8/8</span>
<span class="t" style="left:789.00px;top:453.07px;font-size:13.5px;color:#444;letter-spacing:-0.136px;">Projet en attente :</span>
<span class="t" style="left:899.00px;top:453.07px;font-size:13.5px;color:#1c1c80;font-weight:bold;">0</span>
<div class="a" style="left:262px;top:472px;width:680px;height:31px;background:#e4e4e4;border-radius:3px;"></div>
<div class="a" style="left:706px;top:472px;width:2px;height:31px;background:#eeeeee;"></div>
<div class="a" style="left:262px;top:503px;width:681px;height:26px;background:#fff;border-right:1px solid #e4e4e4;border-left:1px solid #ececec;border-bottom:1px solid #e0e0e0;"></div>
<span class="t" style="left:289.00px;top:479.88px;font-size:15.5px;color:#3a3a3a;letter-spacing:-0.560px;">CONSEIL MUNICIPAL : 10/11/2025</span>
<span class="t" style="left:765.00px;top:479.88px;font-size:15.5px;color:#3a3a3a;letter-spacing:-0.152px;">Limite dépôt : 01/11/2025</span>
<span class="t" style="left:315.00px;top:510.07px;font-size:13.5px;color:#444;letter-spacing:-0.135px;">Projets validés :</span>
<span class="t" style="left:414.00px;top:510.07px;font-size:13.5px;color:#5b8a3e;font-weight:bold;letter-spacing:0.406px;">3/4</span>
<span class="t" style="left:789.00px;top:510.07px;font-size:13.5px;color:#444;letter-spacing:-0.136px;">Projet en attente :</span>
<span class="t" style="left:899.00px;top:510.07px;font-size:13.5px;color:#8a1c1c;font-weight:bold;">1</span>
<svg class="a" style="left:945.5px;top:307.8px;" width="10" height="9" viewBox="0 0 10 9"><path d="M0.500 7.500L5 1L9.500 7.500Z" fill="#8c8c8c" stroke="#8c8c8c" stroke-width="1" stroke-linejoin="round"/></svg>
<svg class="a" style="left:945.5px;top:560px;" width="10" height="9" viewBox="0 0 10 9"><path d="M0.500 1L5 7.500L9.500 1Z" fill="#8c8c8c" stroke="#8c8c8c" stroke-width="1" stroke-linejoin="round"/></svg>
<div class="a" style="left:261px;top:582px;width:931px;height:312px;background:#fff;border-radius:3px;"></div>
<div class="a" style="left:261px;top:581px;width:931px;height:40px;background:#b0200f;border-radius:4px;"></div>
<svg class="a" style="left:269.8px;top:591.5px;" width="17" height="18" viewBox="0 0 17 18"><path fill="#fff" fill-rule="evenodd" d="M2.200 2.500H3.500V1H5.500V2.500H11.500V1H13.500V2.500H14.800A1.200 1.200 0 0 1 16 3.700V16.300A1.200 1.200 0 0 1 14.800 17.500H2.200A1.200 1.200 0 0 1 1 16.300V3.700A1.200 1.200 0 0 1 2.200 2.500ZM2.900 7.200V15.700H14.100V7.200Z"/><path d="M5 11.300L7.400 13.700L12.200 8.900" fill="none" stroke="#fff" stroke-width="1.800"/></svg>
<span class="t" style="left:300.50px;top:593.03px;font-size:16.5px;color:#fff;letter-spacing:-0.400px;-webkit-text-stroke:0.8px currentColor;">Synthèse de la réunion</span>
<div class="a" style="left:486px;top:589.2px;width:546px;height:23.5px;background:#fff;border-radius:3px;"></div>
<span class="t" style="left:494.50px;top:595.00px;font-size:13px;color:#222;letter-spacing:-0.237px;">CONSEIL MUNICIPAL</span>
<svg class="a" style="left:1018px;top:597.6px;" width="10" height="7" viewBox="0 0 10 7"><path d="M1.200 1.500L5 5.300L8.800 1.500" fill="none" stroke="#111" stroke-width="2"/></svg>
<div class="a" style="left:1038.5px;top:589.2px;width:149.5px;height:23.5px;background:#fff;border-radius:3px;"></div>
<span class="t" style="left:1046.50px;top:595.00px;font-size:13px;color:#222;letter-spacing:0.238px;">28 Août 2025</span>
<svg class="a" style="left:1174px;top:597.6px;" width="10" height="7" viewBox="0 0 10 7"><path d="M1.200 1.500L5 5.300L8.800 1.500" fill="none" stroke="#111" stroke-width="2"/></svg>
<div class="a" style="left:262px;top:622.5px;width:915px;height:53px;background:#fff;border:1px solid #e2e2e7;border-radius:2px;"></div><div class="a" style="left:267.5px;top:626.0px;width:136px;height:12.5px;background:#e25b52;border-radius:2px;overflow:hidden;"><div class="a" style="left:0px;top:0px;width:10.5px;height:12.5px;background:#3f8a2a;"></div></div><div class="a" style="left:408px;top:625.5px;width:1px;height:31px;background:#d0d0d0;"></div><span class="t" style="left:267.00px;top:642.57px;font-size:13.5px;color:#444;letter-spacing:-0.044px;">Validation en cours</span><span class="t" style="left:267.00px;top:658.57px;font-size:13.5px;color:#444;letter-spacing:0.347px;">(0/0)</span><span class="t" style="left:412.00px;top:626.00px;font-size:13px;color:#3a3a3a;font-weight:bold;letter-spacing:-0.210px;">[CONSEIL-000370] 03 - CULTURE (DGS)</span><span class="t" style="left:412.00px;top:644.00px;font-size:13px;color:#444;">Demande de subvention pour festival culturel LSECSGLC</span><span class="t" style="left:1094.50px;top:626.00px;font-size:13px;color:#3a3a3a;font-weight:bold;letter-spacing:-0.279px;">En attente de</span>
<div class="a" style="left:262px;top:677.5px;width:915px;height:53px;background:#f5f5fa;border:1px solid #e2e2e7;border-radius:2px;"></div><div class="a" style="left:267.5px;top:681.0px;width:136px;height:12.5px;background:#e25b52;border-radius:2px;overflow:hidden;"><div class="a" style="left:0px;top:0px;width:68px;height:12.5px;background:#3f8a2a;"></div></div><div class="a" style="left:408px;top:680.5px;width:1px;height:31px;background:#d0d0d0;"></div><span class="t" style="left:267.00px;top:697.57px;font-size:13.5px;color:#444;letter-spacing:-0.044px;">Validation en cours</span><span class="t" style="left:267.00px;top:713.57px;font-size:13.5px;color:#444;letter-spacing:0.347px;">(1/2)</span><span class="t" style="left:412.00px;top:681.00px;font-size:13px;color:#3a3a3a;font-weight:bold;letter-spacing:-0.154px;">[CONSEIL-000369] 04 - AMENAGEMENT (DGS)</span><span class="t" style="left:412.00px;top:699.00px;font-size:13px;color:#444;letter-spacing:0.170px;">Avis sur le Plui intercommunal</span><span class="t" style="left:984.50px;top:681.00px;font-size:13px;color:#3a3a3a;font-weight:bold;letter-spacing:-0.292px;">En attente de Robert HOOLITLE</span>
<div class="a" style="left:262px;top:732.5px;width:915px;height:39px;background:#fff;border:1px solid #e2e2e7;border-radius:2px;"></div><div class="a" style="left:267.5px;top:736.0px;width:136px;height:12.5px;background:#e25b52;border-radius:2px;overflow:hidden;"></div><div class="a" style="left:408px;top:735.5px;width:1px;height:32px;background:#d0d0d0;"></div><span class="t" style="left:267.00px;top:754.07px;font-size:13.5px;color:#444;letter-spacing:-0.159px;">En cours de rédaction</span><span class="t" style="left:412.00px;top:736.00px;font-size:13px;color:#3a3a3a;font-weight:bold;letter-spacing:-0.154px;">[CONSEIL-000371] 08 - INFORMATIQUE (DGS)</span><span class="t" style="left:412.00px;top:754.00px;font-size:13px;color:#444;letter-spacing:0.178px;">Projet logiciel</span>
<svg class="a" style="left:1180px;top:628px;" width="10" height="9" viewBox="0 0 10 9"><path d="M0.500 7.500L5 1L9.500 7.500Z" fill="#8c8c8c" stroke="#8c8c8c" stroke-width="1" stroke-linejoin="round"/></svg>
<svg class="a" style="left:1180px;top:880px;" width="10" height="9" viewBox="0 0 10 9"><path d="M0.500 1L5 7.500L9.500 1Z" fill="#8c8c8c" stroke="#8c8c8c" stroke-width="1" stroke-linejoin="round"/></svg>
<div class="a" style="left:1197px;top:582px;width:385px;height:308px;background:#fafafa;"></div>
<div class="a" style="left:1197px;top:582px;width:385px;height:39.5px;background:#4a89dc;"></div>
<span class="t" style="left:1204.50px;top:593.53px;font-size:16.5px;color:#fff;letter-spacing:-0.412px;-webkit-text-stroke:0.55px currentColor;">Calendrier</span>
<svg class="a" style="left:1550px;top:590px;" width="24" height="24" viewBox="0 0 24 24"><path d="M12 3.500H3.500V20.500H20.500V12" fill="none" stroke="#fff" stroke-width="2.400"/><path d="M10.500 13.500L20.500 3.500M14 3H21V10" fill="none" stroke="#fff" stroke-width="2.400"/></svg>
<div class="a" style="left:1207px;top:624.5px;width:365px;height:265px;background:#fdfdfd;border:1px solid #e4e4e4;border-radius:9px;"></div>
<div class="a" style="left:1217px;top:634px;width:345px;height:245px;background:#fff;border:1px solid #222;"></div>
<span class="t" style="left:1352.50px;top:642.03px;font-size:16.5px;color:#444;letter-spacing:-0.248px;">Août 2025</span>
<svg class="a" style="left:1225px;top:644px;" width="8" height="10" viewBox="0 0 8 10"><path d="M7 0.800V9.200L1 5Z" fill="#222"/></svg>
<svg class="a" style="left:1544px;top:644px;" width="8" height="10" viewBox="0 0 8 10"><path d="M1 0.800V9.200L7 5Z" fill="#222"/></svg>
<div class="a" style="left:1218px;top:664px;width:48px;height:26px;background:#3a6fd1;"></div>
<span class="t" style="left:1237.27px;top:669.88px;font-size:15.5px;color:#fff;font-weight:bold;">L</span>
<div class="a" style="left:1267px;top:664px;width:48px;height:26px;background:#3a6fd1;"></div>
<span class="t" style="left:1284.54px;top:669.88px;font-size:15.5px;color:#fff;font-weight:bold;">M</span>
<div class="a" style="left:1316px;top:664px;width:48px;height:26px;background:#3a6fd1;"></div>
<span class="t" style="left:1333.54px;top:669.88px;font-size:15.5px;color:#fff;font-weight:bold;">M</span>
<div class="a" style="left:1365px;top:664px;width:48px;height:26px;background:#3a6fd1;"></div>
<span class="t" style="left:1384.69px;top:669.88px;font-size:15.5px;color:#fff;font-weight:bold;">J</span>
<div class="a" style="left:1414px;top:664px;width:48px;height:26px;background:#3a6fd1;"></div>
<span class="t" style="left:1432.83px;top:669.88px;font-size:15.5px;color:#fff;font-weight:bold;">V</span>
<div class="a" style="left:1463px;top:664px;width:48px;height:26px;background:#3a6fd1;"></div>
<span class="t" style="left:1481.83px;top:669.88px;font-size:15.5px;color:#fff;font-weight:bold;">S</span>
<div class="a" style="left:1512px;top:664px;width:49px;height:26px;background:#3a6fd1;"></div>
<span class="t" style="left:1530.40px;top:669.88px;font-size:15.5px;color:#fff;font-weight:bold;">D</span>
<span class="t" style="left:1233.38px;top:698.03px;font-size:15.5px;color:#777;">28</span>
<span class="t" style="left:1282.38px;top:698.03px;font-size:15.5px;color:#777;">29</span>
<span class="t" style="left:1331.38px;top:698.03px;font-size:15.5px;color:#777;">30</span>
<div class="a" style="left:1364px;top:691.25px;width:50px;height:26.6px;background:#3a6fd1;"></div>
<span class="t" style="left:1380.38px;top:698.03px;font-size:15.5px;color:#fff;font-weight:bold;">31</span>
<span class="t" style="left:1433.69px;top:698.03px;font-size:15.5px;color:#555;">1</span>
<span class="t" style="left:1482.69px;top:698.03px;font-size:15.5px;color:#111;">2</span>
<span class="t" style="left:1531.69px;top:698.03px;font-size:15.5px;color:#111;">3</span>
<span class="t" style="left:1237.69px;top:724.68px;font-size:15.5px;color:#555;">4</span>
<span class="t" style="left:1286.69px;top:724.68px;font-size:15.5px;color:#555;">5</span>
<span class="t" style="left:1335.69px;top:724.68px;font-size:15.5px;color:#555;">6</span>
<span class="t" style="left:1384.69px;top:724.68px;font-size:15.5px;color:#555;">7</span>
<span class="t" style="left:1433.69px;top:724.68px;font-size:15.5px;color:#555;">8</span>
<span class="t" style="left:1482.69px;top:724.68px;font-size:15.5px;color:#111;">9</span>
<span class="t" style="left:1527.38px;top:724.68px;font-size:15.5px;color:#111;">10</span>
<span class="t" style="left:1233.95px;top:751.38px;font-size:15.5px;color:#555;">11</span>
<span class="t" style="left:1282.38px;top:751.38px;font-size:15.5px;color:#555;">12</span>
<span class="t" style="left:1331.38px;top:751.38px;font-size:15.5px;color:#555;">13</span>
<span class="t" style="left:1380.38px;top:751.38px;font-size:15.5px;color:#555;">14</span>
<span class="t" style="left:1429.38px;top:751.38px;font-size:15.5px;color:#555;">15</span>
<span class="t" style="left:1478.38px;top:751.38px;font-size:15.5px;color:#111;">16</span>
<span class="t" style="left:1527.38px;top:751.38px;font-size:15.5px;color:#111;">17</span>
<div class="a" style="left:1218px;top:771.2px;width:48px;height:26.8px;background:#e0283a;"></div>
<span class="t" style="left:1233.38px;top:777.98px;font-size:15.5px;color:#5a1a22;">18</span>
<span class="t" style="left:1282.38px;top:777.98px;font-size:15.5px;color:#555;">19</span>
<span class="t" style="left:1331.38px;top:777.98px;font-size:15.5px;color:#555;">20</span>
<span class="t" style="left:1380.38px;top:777.98px;font-size:15.5px;color:#555;">21</span>
<span class="t" style="left:1429.38px;top:777.98px;font-size:15.5px;color:#555;">22</span>
<span class="t" style="left:1478.38px;top:777.98px;font-size:15.5px;color:#111;">23</span>
<span class="t" style="left:1527.38px;top:777.98px;font-size:15.5px;color:#111;">24</span>
<span class="t" style="left:1233.38px;top:804.78px;font-size:15.5px;color:#555;">25</span>
<span class="t" style="left:1282.38px;top:804.78px;font-size:15.5px;color:#555;">26</span>
<span class="t" style="left:1331.38px;top:804.78px;font-size:15.5px;color:#555;">27</span>
<div class="a" style="left:1364px;top:798px;width:50px;height:26.7px;background:#a8d8f8;"></div>
<span class="t" style="left:1380.38px;top:804.78px;font-size:15.5px;color:#2a4a6a;">28</span>
<span class="t" style="left:1429.38px;top:804.78px;font-size:15.5px;color:#555;">29</span>
<span class="t" style="left:1478.38px;top:804.78px;font-size:15.5px;color:#111;">30</span>
<span class="t" style="left:1527.38px;top:804.78px;font-size:15.5px;color:#111;">31</span>
<span class="t" style="left:1237.69px;top:831.48px;font-size:15.5px;color:#666;">1</span>
<span class="t" style="left:1286.69px;top:831.48px;font-size:15.5px;color:#666;">2</span>
<span class="t" style="left:1335.69px;top:831.48px;font-size:15.5px;color:#666;">3</span>
<span class="t" style="left:1384.69px;top:831.48px;font-size:15.5px;color:#666;">4</span>
<span class="t" style="left:1433.69px;top:831.48px;font-size:15.5px;color:#666;">5</span>
<span class="t" style="left:1482.69px;top:831.48px;font-size:15.5px;color:#888;">6</span>
<span class="t" style="left:1531.69px;top:831.48px;font-size:15.5px;color:#888;">7</span>
<span class="t" style="left:1349.00px;top:859.66px;font-size:16px;color:#3a76c4;letter-spacing:0.202px;text-decoration:underline;">aujourd'hui</span>
<div class="a" style="left:1584px;top:99px;width:13.5px;height:791px;background:#fbfbfb;"></div>
<svg class="a" style="left:1586px;top:105px;" width="10" height="9" viewBox="0 0 10 9"><path d="M0.500 7.500L5 1L9.500 7.500Z" fill="#8c8c8c" stroke="#8c8c8c" stroke-width="1" stroke-linejoin="round"/></svg>
<div class="a" style="left:1586.2px;top:122px;width:9px;height:745px;background:#8d8d8d;border-radius:4px;"></div>
<svg class="a" style="left:1586px;top:877px;" width="10" height="9" viewBox="0 0 10 9"><path d="M0.500 1L5 7.500L9.500 1Z" fill="#8c8c8c" stroke="#8c8c8c" stroke-width="1" stroke-linejoin="round"/></svg>
<div class="a" style="left:1529.8px;top:867px;width:62px;height:20.6px;background:#3a6fd1;"></div>
<div class="a" style="left:1552.8px;top:870.7px;width:16.5px;height:2px;background:#fff;"></div>
<div class="a" style="left:1552.8px;top:876.7px;width:16.5px;height:2px;background:#fff;"></div>
<div class="a" style="left:1552.8px;top:882.7px;width:16.5px;height:2px;background:#fff;"></div>
</div></div>
</body>
</html>
